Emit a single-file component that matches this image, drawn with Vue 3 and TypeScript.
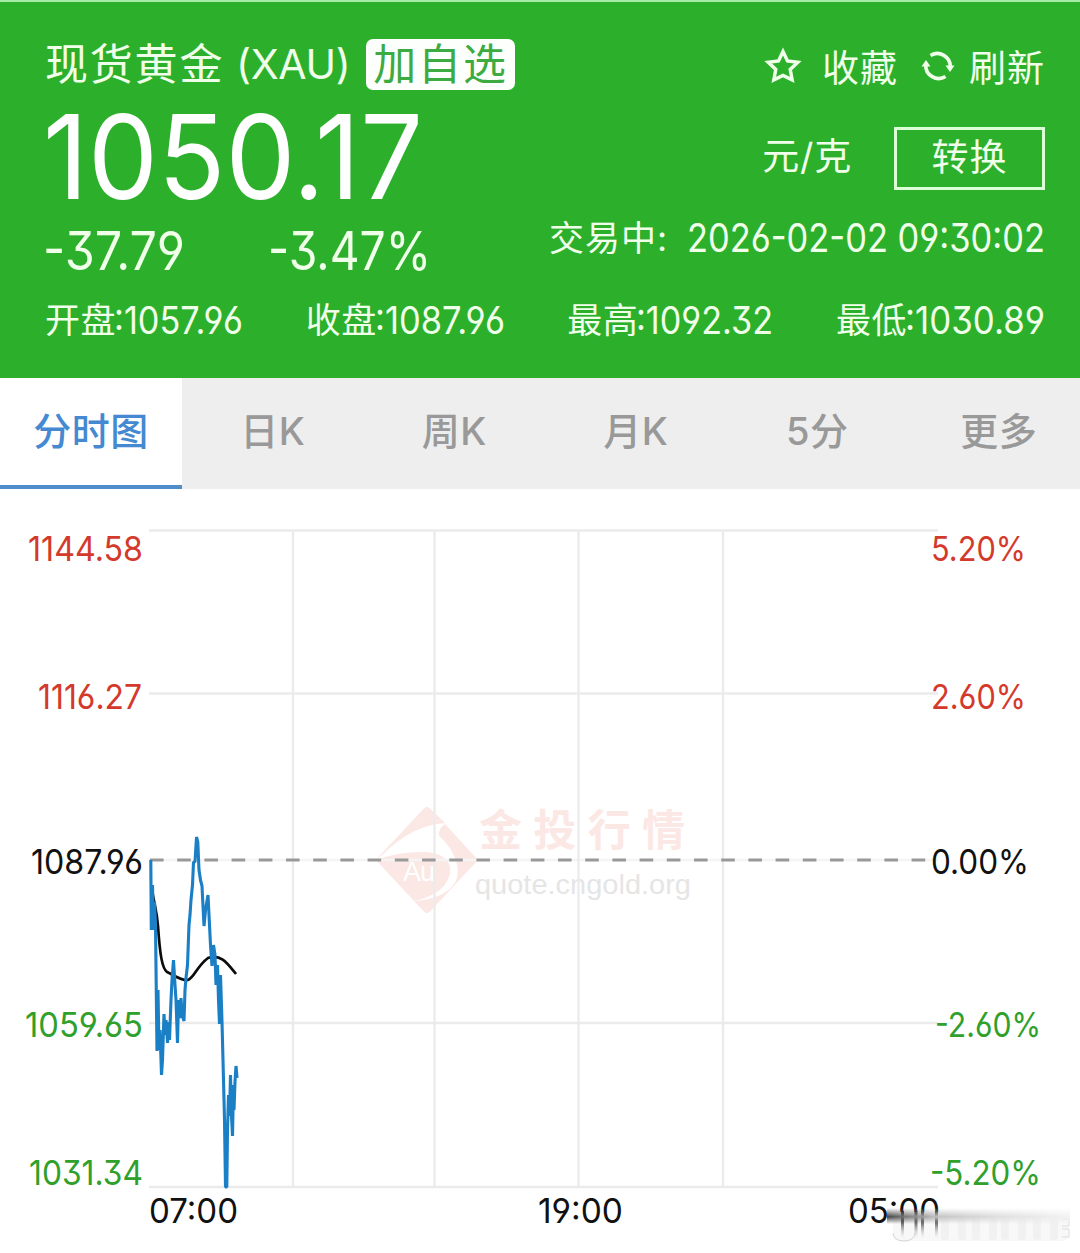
<script setup lang="ts">
interface Stat { label: string; value: string; width: number }
interface AxisLabel { text: string; x: number; y: number; width: number; tone: string }

const stats: Stat[] = [
  { label: '开盘', value: '1057.96', width: 129 },
  { label: '收盘', value: '1087.96', width: 130 },
  { label: '最高', value: '1092.32', width: 137 },
  { label: '最低', value: '1030.89', width: 140 },
]
const tabs: string[] = ['分时图', '日K', '周K', '月K', '5分', '更多']

const labels: AxisLabel[] = [
  { text: '1144.58', x: 28, y: 561, width: 115, tone: 'up' },
  { text: '1116.27', x: 38, y: 709, width: 104, tone: 'up' },
  { text: '1087.96', x: 31, y: 873.5, width: 112, tone: 'flat' },
  { text: '1059.65', x: 25, y: 1037, width: 118, tone: 'down' },
  { text: '1031.34', x: 29, y: 1184.5, width: 114, tone: 'down' },
  { text: '5.20%', x: 931, y: 561, width: 95, tone: 'up' },
  { text: '2.60%', x: 931, y: 709, width: 95, tone: 'up' },
  { text: '0.00%', x: 931, y: 873.5, width: 98, tone: 'flat' },
  { text: '-2.60%', x: 935, y: 1037, width: 106, tone: 'down' },
  { text: '-5.20%', x: 930, y: 1184.5, width: 111, tone: 'down' },
  { text: '07:00', x: 149, y: 1223, width: 89, tone: 'flat' },
  { text: '19:00', x: 538, y: 1223, width: 85, tone: 'flat' },
  { text: '05:00', x: 848, y: 1223, width: 92, tone: 'flat' },
]
const rows: number[] = [530.5, 693.5, 860, 1023, 1187]
const cols: number[] = [293, 434.5, 578.5, 723]
const smears: number[] = [901, 914.5, 921, 935]
const ghosts: number[] = [941, 958, 972, 989, 1001, 1018, 1033, 1050]

const price =
  '150.8,860 151.3,930 152.5,885 153.5,930 154.5,902 155.5,925 157,1051 158,990 159,1050 160,1030 161.5,1075 162.5,1060 164,1014 165,1035 166,1020 167.5,1043 168.5,1022 169.5,1040 171,1000 172,980 173.5,960 175,985 176,1000 177.5,1043 178.5,1000 180,1018 181,998 182,1014 184,1021 185,990 186,978 187.5,965 189,925 190,915 191,900 192.5,885 193.5,862 195,862 196.5,837 197.8,842 199,870 200.500,880 202,886 204,926 205.5,910 208,895 209.5,925 210.5,945 212,966 213.5,945 215,955 216,985 217.5,965 218.5,1000 219.5,1024 220.5,975 222,1022 223,1060 224.5,1120 225.5,1187 226.8,1187 227.5,1130 228.5,1095 229.5,1116 230.5,1075 231.5,1116 232.5,1136 233.5,1085 234,1110 235,1082 236,1066 237,1078'
const average = 'M152 890C155 908 157 912 158 926C160 955 162 968 167 972C174 975 181 981 188 980C194 978 197 966 208 958C221 953 228 964 236 974'
</script>

<template>
  <main class="page">
    <header class="quote">
      <div class="summary">
        <div class="left">
          <div class="title">
            <span class="name">现货黄金</span><span class="code">(XAU)</span>
            <button class="add">加自选</button>
          </div>
          <svg class="price" viewBox="0 0 400 116"><text x="-2" y="99" textLength="380" lengthAdjust="spacingAndGlyphs">1050.17</text></svg>
          <svg class="change" viewBox="0 0 400 70">
            <text x="-2" y="54" textLength="142" lengthAdjust="spacingAndGlyphs">-37.79</text>
            <text x="223" y="54" textLength="163" lengthAdjust="spacingAndGlyphs">-3.47%</text>
          </svg>
        </div>
        <div class="right">
          <div class="actions">
            <svg class="star" viewBox="0 0 36 36"><path d="M18 3.500l4.500 9.500 10.300 1.200-7.600 7.200 2 10.500L18 27.500l-9.200 4.400 2-10.500-7.600-7.200L13.500 13z" /></svg>
            <span class="fav">收藏</span>
            <svg class="refresh" viewBox="0 0 32 32">
              <path d="M8.500 5.500A13 13 0 0 1 28.300 17M23.500 26.500A13 13 0 0 1 3.700 15" />
              <path class="tip" d="M23.500 15.500h9l-4.500 6.500zM-.5 16.500h9l-4.500-6.500z" />
            </svg>
            <span class="reload">刷新</span>
          </div>
          <div class="unit"><span>元/克</span><button class="convert">转换</button></div>
          <div class="status">
            <span class="state">交易中:</span>
            <svg class="time" viewBox="0 0 358 50"><text x="0" y="37.500" textLength="358" lengthAdjust="spacingAndGlyphs">2026-02-02 09:30:02</text></svg>
          </div>
        </div>
      </div>
      <div class="stats">
        <span v-for="s in stats" :key="s.label" class="stat">
          <span>{{ s.label }}</span>
          <svg class="num" :width="s.width - 2" height="68"><text x="-2" y="48" :textLength="s.width" lengthAdjust="spacingAndGlyphs">:{{ s.value }}</text></svg>
        </span>
      </div>
    </header>

    <nav class="tabs">
      <a v-for="(t, i) in tabs" :key="t" :class="['tab', { active: i === 0 }]">{{ t }}</a>
    </nav>

    <svg class="chart" viewBox="0 489 1080 764">
      <defs>
        <linearGradient id="band" x1="0" y1="0" x2="1" y2="0">
          <stop offset="0" stop-color="#444" />
          <stop offset=".1" stop-color="#777" />
          <stop offset=".28" stop-color="#c4c4c4" />
          <stop offset=".6" stop-color="#dedede" />
          <stop offset="1" stop-color="#f2f2f2" />
        </linearGradient>
        <linearGradient id="bandfade" x1="0" y1="0" x2="0" y2="1">
          <stop offset="0" stop-color="#000" />
          <stop offset=".55" stop-color="#fff" />
          <stop offset="1" stop-color="#000" />
        </linearGradient>
        <linearGradient id="drip" x1="0" y1="0" x2="0" y2="1">
          <stop offset="0" stop-color="#111" />
          <stop offset=".35" stop-color="#444" />
          <stop offset="1" stop-color="#ddd" stop-opacity="0" />
        </linearGradient>
        <mask id="bandmask"><rect x="887" y="1208" width="183" height="16" fill="url(#bandfade)" /></mask>
      </defs>

      <g class="brand">
        <path d="M424 808.500Q427 805.500 430 808.500L445 823Q412 825 382 855L376.500 859z" />
        <path d="M445 824L478 860L430 911.500Q427 914.500 424 911.500L414 901Q446 899 456 881C463 863 448 843 439 836Q438 829 445 824z" />
        <path d="M376 860Q400 851 427 852C446 854 452 864 450 873C447 887 436 896 414 901z" />
        <text class="au" x="403" y="881" textLength="32">Au</text>
        <text class="brand-name" x="479" y="846" textLength="206">金投行情</text>
        <text class="brand-url" x="475" y="894" textLength="216" lengthAdjust="spacingAndGlyphs">quote.cngold.org</text>
      </g>

      <g class="grid">
        <line v-for="y in rows" :key="y" x1="149" x2="938" :y1="y" :y2="y" :class="{ faint: y === 860 }" />
        <line v-for="x in cols" :key="x" :x1="x" :x2="x" y1="530" y2="1187" />
      </g>
      <line class="base" x1="150" x2="932" y1="860" y2="860" />
      <path class="avg" :d="average" />
      <polyline class="line" :points="price" />

      <text v-for="l in labels" :key="l.text" :class="['axis', l.tone]" :x="l.x" :y="l.y" :textLength="l.width" lengthAdjust="spacingAndGlyphs">{{ l.text }}</text>

      <g class="smear">
        <rect x="891" y="1212" width="179" height="31" fill="#fff" />
        <rect x="893" y="1217" width="176" height="24" rx="6" fill="#f8f8f8" />
        <rect v-for="x in ghosts" :key="x" :x="x" y="1217" width="8" height="23" rx="3" fill="#f1f1f1" />
        <path d="M893 1233Q894 1241 904 1241T915 1233" fill="none" stroke="#d4d4d4" />
        <path d="M1062 1219h7v7h-7M1062 1229h7v8h-7" fill="none" stroke="#dcdcdc" />
        <rect v-for="x in smears" :key="x" :x="x" y="1211" width="3" height="28" fill="url(#drip)" />
        <rect x="887" y="1208" width="183" height="16" fill="url(#band)" mask="url(#bandmask)" />
      </g>
    </svg>
  </main>
</template>

<style>
body { margin: 0; background: #fff; }
</style>

<style scoped>
.page { width: 1080px; height: 1253px; overflow: hidden; background: #fff; font-family: Inter, "Noto Sans CJK SC", sans-serif; font-feature-settings: "cv03", "cv04", "cv09"; }
button { font: inherit; letter-spacing: inherit; padding: 0; margin: 0; }
.quote { box-sizing: border-box; height: 378px; padding: 28px 35px 0 45px; background: #2cb02c; border-top: 2px solid #a6eba6; color: #f0ffe9; white-space: nowrap; }
.quote svg { display: block; flex: none; overflow: visible; }
.quote svg text { fill: currentColor; }
.summary { display: flex; justify-content: space-between; height: 256px; }
.left, .right { display: flex; flex-direction: column; }
.right { align-items: flex-end; }
.title { display: flex; align-items: center; height: 70px; font-size: 43px; line-height: 50px; }
.name { letter-spacing: 1.800px; width: 191px; margin-top: -3px; }
.code { font-size: 41px; font-weight: 400; letter-spacing: -.3px; width: 130px; margin-top: -2px; }
.add { box-sizing: border-box; width: 149px; height: 51px; margin-top: -2px; border: 0; border-radius: 7px; background: #fdfffd; color: #3cab42; line-height: 49px; letter-spacing: 1.800px; text-align: center; }
.price { width: 400px; height: 116px; font-size: 117px; color: #fff; }
.change { width: 400px; height: 70px; font-size: 53px; }
.actions { display: flex; align-items: center; height: 72px; font-size: 37px; letter-spacing: 1px; }
.star { width: 36px; height: 36px; fill: none; stroke: currentColor; stroke-width: 3.400; margin-right: 21px; margin-top: -1px; }
.fav { margin-right: 24px; }
.refresh { width: 32px; height: 32px; fill: none; stroke: currentColor; stroke-width: 3.600; margin-right: 15px; }
.refresh .tip { fill: currentColor; stroke: none; }
.unit { display: flex; align-items: center; height: 112px; font-size: 37px; letter-spacing: .8px; }
.unit > span { margin-top: -8px; }
.convert { box-sizing: border-box; width: 151px; height: 63px; margin-left: 42px; border: 3px solid #dcffd8; background: none; color: inherit; line-height: 54px; letter-spacing: 1px; }
.status { display: flex; height: 50px; line-height: 48px; font-size: 35px; }
.state { letter-spacing: 1px; margin-right: 19px; }
.time { width: 358px; height: 50px; font-size: 39px; }
.stats { display: flex; justify-content: space-between; height: 68px; line-height: 68px; font-size: 35px; }
.stat { display: flex; }
.stat > span { letter-spacing: .5px; }
.num { font-size: 38.500px; }
.tabs { display: flex; height: 111px; overflow: hidden; background: #eee; }
.tab { flex: 0 0 181.500px; box-sizing: border-box; height: 111px; line-height: 107px; text-align: center; font-size: 38px; font-weight: 500; color: #999; letter-spacing: .5px; }
.tab.active { flex: 0 0 182px; color: #4489d1; background: #fff; border-bottom: 4px solid #4f8dcb; }
.chart { display: block; width: 1080px; height: 764px; }
.grid line { stroke: #ebebeb; stroke-width: 2.300; }
.grid .faint { stroke: #f4f4f4; }
.base { stroke: #999; stroke-width: 2.800; stroke-dasharray: 13.600 13.600; }
.avg { fill: none; stroke: #0c0c0c; stroke-width: 2.700; }
.line { fill: none; stroke: #1b7fc6; stroke-width: 3.100; stroke-linejoin: bevel; }
.axis { font-size: 34.500px; }
.up { fill: #d33a2c; }
.down { fill: #30a02c; }
.flat { fill: #111; }
.brand { fill: #fbe7e4; }
.au { fill: #fff; font: 27px "Liberation Sans", sans-serif; }
.brand-name { font-size: 43px; font-weight: 700; }
.brand-url { fill: #e5e5e5; font: 28px "Liberation Sans", sans-serif; }
</style>
